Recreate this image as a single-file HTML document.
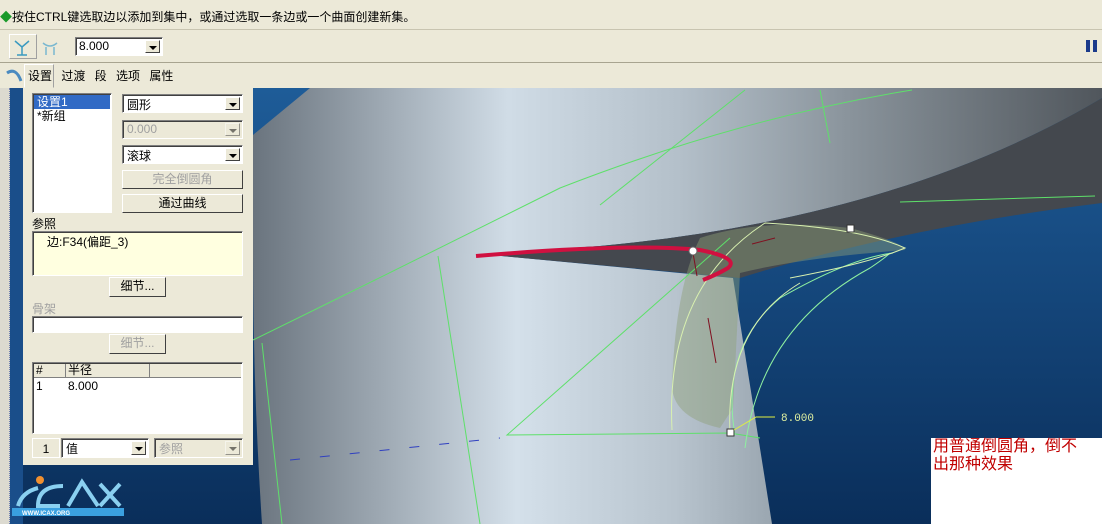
<!DOCTYPE html><html><head><meta charset="utf-8"><style>
*{margin:0;padding:0;box-sizing:border-box}
body{width:1102px;height:524px;overflow:hidden;position:relative;background:#ece9d8;font-family:"Liberation Sans","Noto Sans CJK SC",sans-serif;font-size:12px;color:#000}
.a{position:absolute}
.sel{background:#fff;border:1px solid #7f7f7f;border-right-color:#fff;border-bottom-color:#fff;box-shadow:inset 1px 1px 0 #404040}
.dd{position:absolute;right:2px;top:2px;width:15px;bottom:2px;background:#ece9d8;border:1px solid;border-color:#fff #404040 #404040 #fff}
.dd:after{content:"";position:absolute;left:3px;top:5px;border:4px solid transparent;border-top:4px solid #000;border-bottom:0}
.btn{position:absolute;background:#ece9d8;border:1px solid;border-color:#fff #404040 #404040 #fff;text-align:center;line-height:17px}
.dis{color:#a0a0a0}
</style></head><body>
<div class="a" style="left:0;top:0;width:1102px;height:30px;border-bottom:1px solid #c8c4b0"></div>
<div class="a" style="left:0;top:8px;font-size:12px;white-space:nowrap"><span style="color:#1a9a2a">◆</span>按住CTRL键选取边以添加到集中，或通过选取一条边或一个曲面创建新集。</div>
<div class="a" style="left:0;top:62px;width:1102px;height:1px;background:#a8a490"></div>
<div class="a" style="left:9px;top:34px;width:28px;height:25px;border:1px solid;border-color:#fff #a0a0a0 #a0a0a0 #fff"></div>
<svg class="a" style="left:11px;top:35px" width="56" height="24"><g stroke="#3a9ac0" fill="none" stroke-width="1.5"><path d="M4 6 L11 12 L18 6 M11 12 V20 M6 20 H16"/><path d="M32 8 Q39 14 46 8 M35 12 V20 M43 12 V20" stroke="#7ab8d0"/></g></svg>
<div class="a sel" style="left:75px;top:37px;width:88px;height:19px;padding:1px 3px">8.000<div class="dd"></div></div>
<div class="a" style="left:1086px;top:40px;width:4px;height:12px;background:#1a3a8a"></div>
<div class="a" style="left:1093px;top:40px;width:4px;height:12px;background:#1a3a8a"></div>
<svg class="a" style="left:4px;top:65px" width="20" height="20"><path d="M3 8 Q12 2 17 16" stroke="#4a8ac0" stroke-width="3" fill="none"/></svg>
<div class="a" style="left:24px;top:64px;width:30px;height:24px;border:1px solid;border-color:#fff #a0a0a0 transparent #fff"></div>
<div class="a" style="left:28px;top:67px;font-size:12px;word-spacing:6px;white-space:nowrap">设置 过渡 段 选项 属性</div>
<svg class="a" style="left:0;top:88px" width="1102" height="436">
<defs>
<linearGradient id="bg" x1="0" y1="0" x2="0" y2="1"><stop offset="0" stop-color="#1e5c98"/><stop offset="1" stop-color="#0a2e5a"/></linearGradient>
<linearGradient id="cy" gradientUnits="userSpaceOnUse" x1="253" y1="0" x2="1102" y2="0"><stop offset="0" stop-color="#6a747e"/><stop offset=".3" stop-color="#d0dce6"/><stop offset=".5" stop-color="#b4c0ca"/><stop offset=".7" stop-color="#8a949c"/><stop offset="1" stop-color="#50565c"/></linearGradient>
<linearGradient id="cy2" gradientUnits="userSpaceOnUse" x1="253" y1="0" x2="780" y2="0"><stop offset="0" stop-color="#6a747e"/><stop offset=".5" stop-color="#d4e0ea"/><stop offset=".8" stop-color="#b8c4ce"/><stop offset="1" stop-color="#98a4ae"/></linearGradient>
</defs>
<rect width="1102" height="436" fill="url(#bg)"/>
<path d="M310 0 L1102 0 L1102 10 Q900 130 600 158 L480 166 L253 170 L253 47 Z" fill="url(#cy)"/>
<path d="M253 160 L480 166 L733 190 L772 436 L262 436 Q253 300 253 160 Z" fill="url(#cy2)"/>
<path d="M1102 10 Q900 130 600 158 L480 166 L740 190 Q900 140 1102 115 Z" fill="#44484e"/>
<path d="M700 150 Q760 130 850 140 Q905 155 905 162 Q800 170 740 185 L733 320 L720 340 Q675 330 672 300 Q675 200 700 150Z" fill="#8fa078" opacity=".45"/>
<g stroke="#5ee06a" fill="none" stroke-width="1">
<path d="M253 252 Q400 180 560 100 Q740 30 912 2"/>
<path d="M262 255 L282 436"/><path d="M438 168 L480 436"/>
<path d="M730 150 L507 347 L730 345 L760 350"/>
<path d="M820 2 L830 55"/><path d="M900 114 L1095 108"/>
<path d="M745 2 L600 117"/>
<path d="M735 347 Q720 260 780 210 Q850 170 893 165" stroke="#8ef0a0"/>
<path d="M745 360 Q760 240 870 180 Q885 170 890 165" stroke="#8ef0a0"/>
</g>
<g stroke="#d8f0b0" fill="none" stroke-width="1">
<path d="M672 342 Q665 200 765 135 Q860 140 905 160 Q870 175 790 190"/>
<path d="M730 345 Q725 240 800 195"/>
</g>
<path d="M290 372 L500 350" stroke="#3040c0" stroke-dasharray="10 20" stroke-width="1"/>
<path d="M476 168 Q630 155 700 162 Q740 170 728 180 Q718 186 703 192" stroke="#d01040" stroke-width="4" fill="none"/>
<g stroke="#801020" stroke-width="1"><path d="M752 156 L775 150"/><path d="M708 230 L716 275"/><path d="M693 165 L697 188"/></g>
<circle cx="693" cy="163" r="4" fill="#fff" stroke="#666"/>
<rect x="847" y="137" width="7" height="7" fill="#fff" stroke="#333"/>
<rect x="727" y="341" width="7" height="7" fill="#fff" stroke="#333"/>
<path d="M734 342 L756 329 L775 329" stroke="#e0f040" fill="none"/>
<text x="781" y="333" fill="#e0f0a0" font-family="Liberation Mono,monospace" font-size="11">8.000</text>
</svg>
<div class="a" style="left:0;top:88px;width:10px;height:436px;background:#dcdad0;border-right:1px dotted #7080b0"></div>
<div class="a" style="left:10px;top:88px;width:13px;height:436px;background:#1a4e8a"></div>
<div class="a" style="left:23px;top:88px;width:230px;height:377px;background:#ece9d8"></div>
<div class="a sel" style="left:32px;top:93px;width:80px;height:120px;padding:1px"><div style="background:#316ac5;color:#fff;width:76px;height:14px;line-height:14px;padding-left:3px">设置1</div><div style="padding-left:3px;line-height:14px">*新组</div></div>
<div class="a sel" style="left:122px;top:94px;width:121px;height:19px;padding:1px 4px">圆形<div class="dd"></div></div>
<div class="a sel dis" style="left:122px;top:120px;width:121px;height:19px;padding:1px 4px;background:#ece9d8">0.000<div class="dd" style="opacity:.5"></div></div>
<div class="a sel" style="left:122px;top:145px;width:121px;height:19px;padding:1px 4px">滚球<div class="dd"></div></div>
<div class="btn dis" style="left:122px;top:170px;width:121px;height:19px">完全倒圆角</div>
<div class="btn" style="left:122px;top:194px;width:121px;height:19px">通过曲线</div>
<div class="a" style="left:32px;top:215px">参照</div>
<div class="a sel" style="left:32px;top:231px;width:211px;height:45px;background:#ffffe0;padding:1px 14px">边:F34(偏距_3)</div>
<div class="btn" style="left:109px;top:277px;width:57px;height:20px">细节...</div>
<div class="a dis" style="left:32px;top:300px">骨架</div>
<div class="a sel" style="left:32px;top:316px;width:211px;height:17px"></div>
<div class="btn dis" style="left:109px;top:334px;width:57px;height:20px">细节...</div>
<div class="a sel" style="left:32px;top:362px;width:211px;height:72px;padding:1px">
<div style="display:flex;height:14px;line-height:13px;background:#ece9d8"><div style="width:32px;border-right:1px solid #808080;border-bottom:1px solid #808080;padding-left:2px">#</div><div style="width:84px;border-right:1px solid #808080;border-bottom:1px solid #808080;padding-left:2px">半径</div><div style="flex:1;border-bottom:1px solid #808080"></div></div>
<div style="display:flex;line-height:16px"><div style="width:32px;padding-left:2px">1</div><div style="padding-left:2px">8.000</div></div></div>
<div class="a" style="left:32px;top:438px;width:28px;height:20px;line-height:20px;text-align:center;border:1px solid #fff">1</div>
<div class="a sel" style="left:61px;top:438px;width:88px;height:20px;padding:1px 4px">值<div class="dd"></div></div>
<div class="a sel dis" style="left:154px;top:438px;width:89px;height:20px;padding:1px 4px;background:#ece9d8">参照<div class="dd" style="opacity:.5"></div></div>
<svg class="a" style="left:8px;top:470px" width="120" height="50"><g stroke="#8ad0f0" stroke-width="4" fill="none"><path d="M10 36 Q14 22 30 18"/><path d="M55 16 Q30 16 30 36 L52 36"/><path d="M60 36 L74 12 L90 36"/><path d="M92 14 L112 36 M112 14 L92 36"/></g><circle cx="32" cy="10" r="4" fill="#f09030"/><rect x="4" y="38" width="112" height="8" fill="#3aa0e0"/><text x="14" y="45" fill="#fff" font-size="6" font-weight="bold">WWW.ICAX.ORG</text></svg>
<div class="a" style="left:931px;top:438px;width:171px;height:86px;background:#fff;color:#c00000;font-size:16px;line-height:18px;padding:0 2px;white-space:nowrap">用普通倒圆角，倒不<br>出那种效果</div>
</body></html>
